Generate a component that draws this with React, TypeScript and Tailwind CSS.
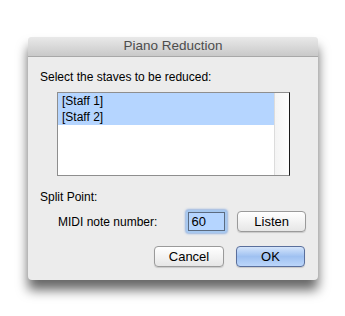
import React from "react";

const font = { fontFamily: '"Lucida Grande", "Liberation Sans", Arial, sans-serif' };

const MacButton: React.FC<{ label: string; primary?: boolean; className?: string }> = ({
  label,
  primary,
  className = "",
}) => (
  <button
    type="button"
    className={
      "h-[21px] rounded-[4px] border text-[13px] leading-none text-black " +
      (primary
        ? "border-[#5a6f9c] bg-gradient-to-b from-[#d5e5fb] via-[#9fc1f1] to-[#bcd6fa] "
        : "border-[#9a9a9a] bg-gradient-to-b from-[#ffffff] via-[#f3f3f3] to-[#e6e6e6] ") +
      "shadow-[0_1px_1px_rgba(0,0,0,0.15)] " +
      className
    }
  >
    {label}
  </button>
);

export default function App() {
  return (
    <div className="min-h-[316px] w-[345px] bg-white pl-[28px] pt-[37px]" style={font}>
      <div className="flex h-[243px] w-[290px] flex-col overflow-hidden rounded-[4px] bg-[#ececec] shadow-[0_10px_12px_rgba(0,0,0,0.6)]">
        {/* title bar */}
        <div className="flex h-[20px] items-center justify-center border-b border-[#a8a8a8] bg-gradient-to-b from-[#e9e9e9] to-[#c9c9c9] text-[13.5px] text-[#4d4d4d]">
          Piano Reduction
        </div>

        <div className="flex flex-col px-[12px] text-[12px] text-black">
          <div className="mt-[13px] h-[15px] leading-[15px]">Select the staves to be reduced:</div>

          {/* staves list */}
          <div className="ml-[17px] mt-[7px] flex h-[84px] w-[233px] border border-[#8e8e8e] border-r-[#1a1a1a] bg-white">
            <div className="flex flex-1 flex-col">
              <div className="h-[16px] bg-[#b5d5ff] pl-[4px] leading-[16px]">[Staff 1]</div>
              <div className="h-[16px] bg-[#b5d5ff] pl-[4px] leading-[16px]">[Staff 2]</div>
            </div>
            <div className="w-[15px] border-l border-[#dcdcdc] bg-gradient-to-r from-[#f4f4f4] to-[#fdfdfd]" />
          </div>

          <div className="mt-[14px] h-[15px] leading-[15px]">Split Point:</div>

          <div className="mt-[5px] flex h-[23px] items-center">
            <div className="ml-[18px] w-[128px]">MIDI note number:</div>
            <div className="ml-[1px] flex h-[23px] w-[41px] items-center justify-center rounded-[3px] bg-[#a7c8ef] p-[2px] shadow-[0_0_2px_1px_rgba(120,160,220,0.7)]">
              <div className="h-full w-full border border-[#5b6b80] bg-[#b5d5ff] pl-[2px] text-[13px] leading-[17px]">
                60
              </div>
            </div>
            <MacButton label="Listen" className="ml-[10px] w-[69px]" />
          </div>

          <div className="mt-[13px] flex justify-end gap-[12px] pr-[1px]">
            <MacButton label="Cancel" className="w-[70px]" />
            <MacButton label="OK" primary className="w-[69px]" />
          </div>
        </div>
      </div>
    </div>
  );
}
